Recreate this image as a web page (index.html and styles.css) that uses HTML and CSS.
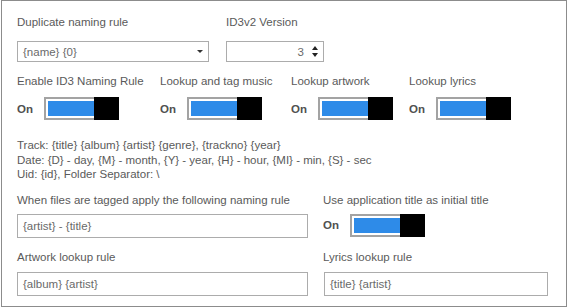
FILE: index.html
```html
<!DOCTYPE html>
<html>
<head>
<meta charset="utf-8">
<link rel="stylesheet" href="styles.css">
</head>
<body>
<div class="frame">
  <div class="row top-row">
    <div class="field">
      <div class="label">Duplicate naming rule</div>
      <div class="combo">
        <span class="value">{name} {0}</span>
        <span class="caret"></span>
      </div>
    </div>
    <div class="field">
      <div class="label">ID3v2 Version</div>
      <div class="numeric">
        <span class="value">3</span>
        <span class="spin"><span class="up"></span><span class="down"></span></span>
      </div>
    </div>
  </div>

  <div class="row toggles-row">
    <div class="field">
      <div class="label">Enable ID3 Naming Rule</div>
      <div class="toggle-line"><span class="on">On</span><span class="toggle"><span class="track"></span><span class="thumb"></span></span></div>
    </div>
    <div class="field">
      <div class="label">Lookup and tag music</div>
      <div class="toggle-line"><span class="on">On</span><span class="toggle"><span class="track"></span><span class="thumb"></span></span></div>
    </div>
    <div class="field">
      <div class="label">Lookup artwork</div>
      <div class="toggle-line"><span class="on">On</span><span class="toggle"><span class="track"></span><span class="thumb"></span></span></div>
    </div>
    <div class="field">
      <div class="label">Lookup lyrics</div>
      <div class="toggle-line"><span class="on">On</span><span class="toggle"><span class="track"></span><span class="thumb"></span></span></div>
    </div>
  </div>

  <div class="help">
    <div>Track: {title} {album} {artist} {genre}, {trackno} {year}</div>
    <div>Date: {D} - day, {M} - month, {Y} - year, {H} - hour, {MI} - min, {S} - sec</div>
    <div>Uid: {id}, Folder Separator: \</div>
  </div>

  <div class="row pair-row naming">
    <div class="field">
      <div class="label">When files are tagged apply the following naming rule</div>
      <div class="textbox wide">{artist} - {title}</div>
    </div>
    <div class="field">
      <div class="label">Use application title as initial title</div>
      <div class="toggle-line single"><span class="on">On</span><span class="toggle"><span class="track"></span><span class="thumb"></span></span></div>
    </div>
  </div>

  <div class="row pair-row lookup">
    <div class="field">
      <div class="label">Artwork lookup rule</div>
      <div class="textbox wide">{album} {artist}</div>
    </div>
    <div class="field">
      <div class="label">Lyrics lookup rule</div>
      <div class="textbox narrow">{title} {artist}</div>
    </div>
  </div>
</div>
</body>
</html>
```

FILE: styles.css
```css
* { box-sizing: border-box; }
html, body { margin: 0; padding: 0; background: #ffffff; }
body {
  font-family: "Segoe UI", "Liberation Sans", Arial, sans-serif;
  font-size: 11.5px;
  color: #595959;
}
.frame {
  margin-left: 1px;
  width: 566px;
  height: 307px;
  border: 1px solid #8c8c8c;
  padding: 13px 15px 0 15px;
  background: #fff;
}
.row { display: grid; }
.label {
  height: 16px;
  line-height: 16px;
  white-space: nowrap;
  color: #5a5a5a;
}
.top-row { grid-template-columns: 209px auto; }
.top-row .label { margin-bottom: 11px; }
.combo, .numeric {
  height: 21px;
  border: 1px solid #acacac;
  display: flex;
  align-items: center;
  position: relative;
  color: #6a6a6a;
}
.combo { width: 192px; padding-left: 5px; }
.combo .caret {
  position: absolute;
  right: 5px;
  top: 8px;
  width: 0; height: 0;
  border-left: 3px solid transparent;
  border-right: 3px solid transparent;
  border-top: 3px solid #333;
}
.numeric { width: 98px; justify-content: flex-end; padding-right: 5px; }
.numeric .value { margin-right: 8px; }
.spin { display: flex; flex-direction: column; gap: 3px; }
.spin .up {
  width: 0; height: 0;
  border-left: 3px solid transparent;
  border-right: 3px solid transparent;
  border-bottom: 4px solid #222;
}
.spin .down {
  width: 0; height: 0;
  border-left: 3px solid transparent;
  border-right: 3px solid transparent;
  border-top: 4px solid #222;
}
.toggles-row {
  margin-top: 11px;
  grid-template-columns: 143px 131px 118px auto;
}
.toggle-line {
  margin-top: 8px;
  display: flex;
  align-items: center;
  height: 23px;
}
.on {
  width: 27px;
  font-weight: bold;
  color: #505050;
}
.toggle {
  position: relative;
  width: 75px;
  height: 23px;
  border: 2px solid #a3a3a3;
  padding: 2px;
  background: #fff;
}
.track { display: block; width: 46px; height: 15px; background: #2e8be8; }
.thumb {
  position: absolute;
  right: -2px;
  top: -2px;
  width: 25px;
  height: 23px;
  background: #000;
}
.help {
  margin-top: 18px;
  line-height: 14.5px;
  color: #5a5a5a;
}
.pair-row { grid-template-columns: 306px auto; }
.naming { margin-top: 10px; }
.naming .label { margin-bottom: 6px; }
.toggle-line.single { margin-top: 6px; }
.lookup { margin-top: 11px; }
.lookup .label { margin-bottom: 7px; }
.textbox {
  height: 24px;
  line-height: 22px;
  border: 1px solid #acacac;
  padding-left: 5px;
  color: #6a6a6a;
  white-space: nowrap;
}
.wide { width: 291px; }
.narrow { width: 224px; margin-left: 1px; }
.naming .textbox { margin-top: 0; }
```
